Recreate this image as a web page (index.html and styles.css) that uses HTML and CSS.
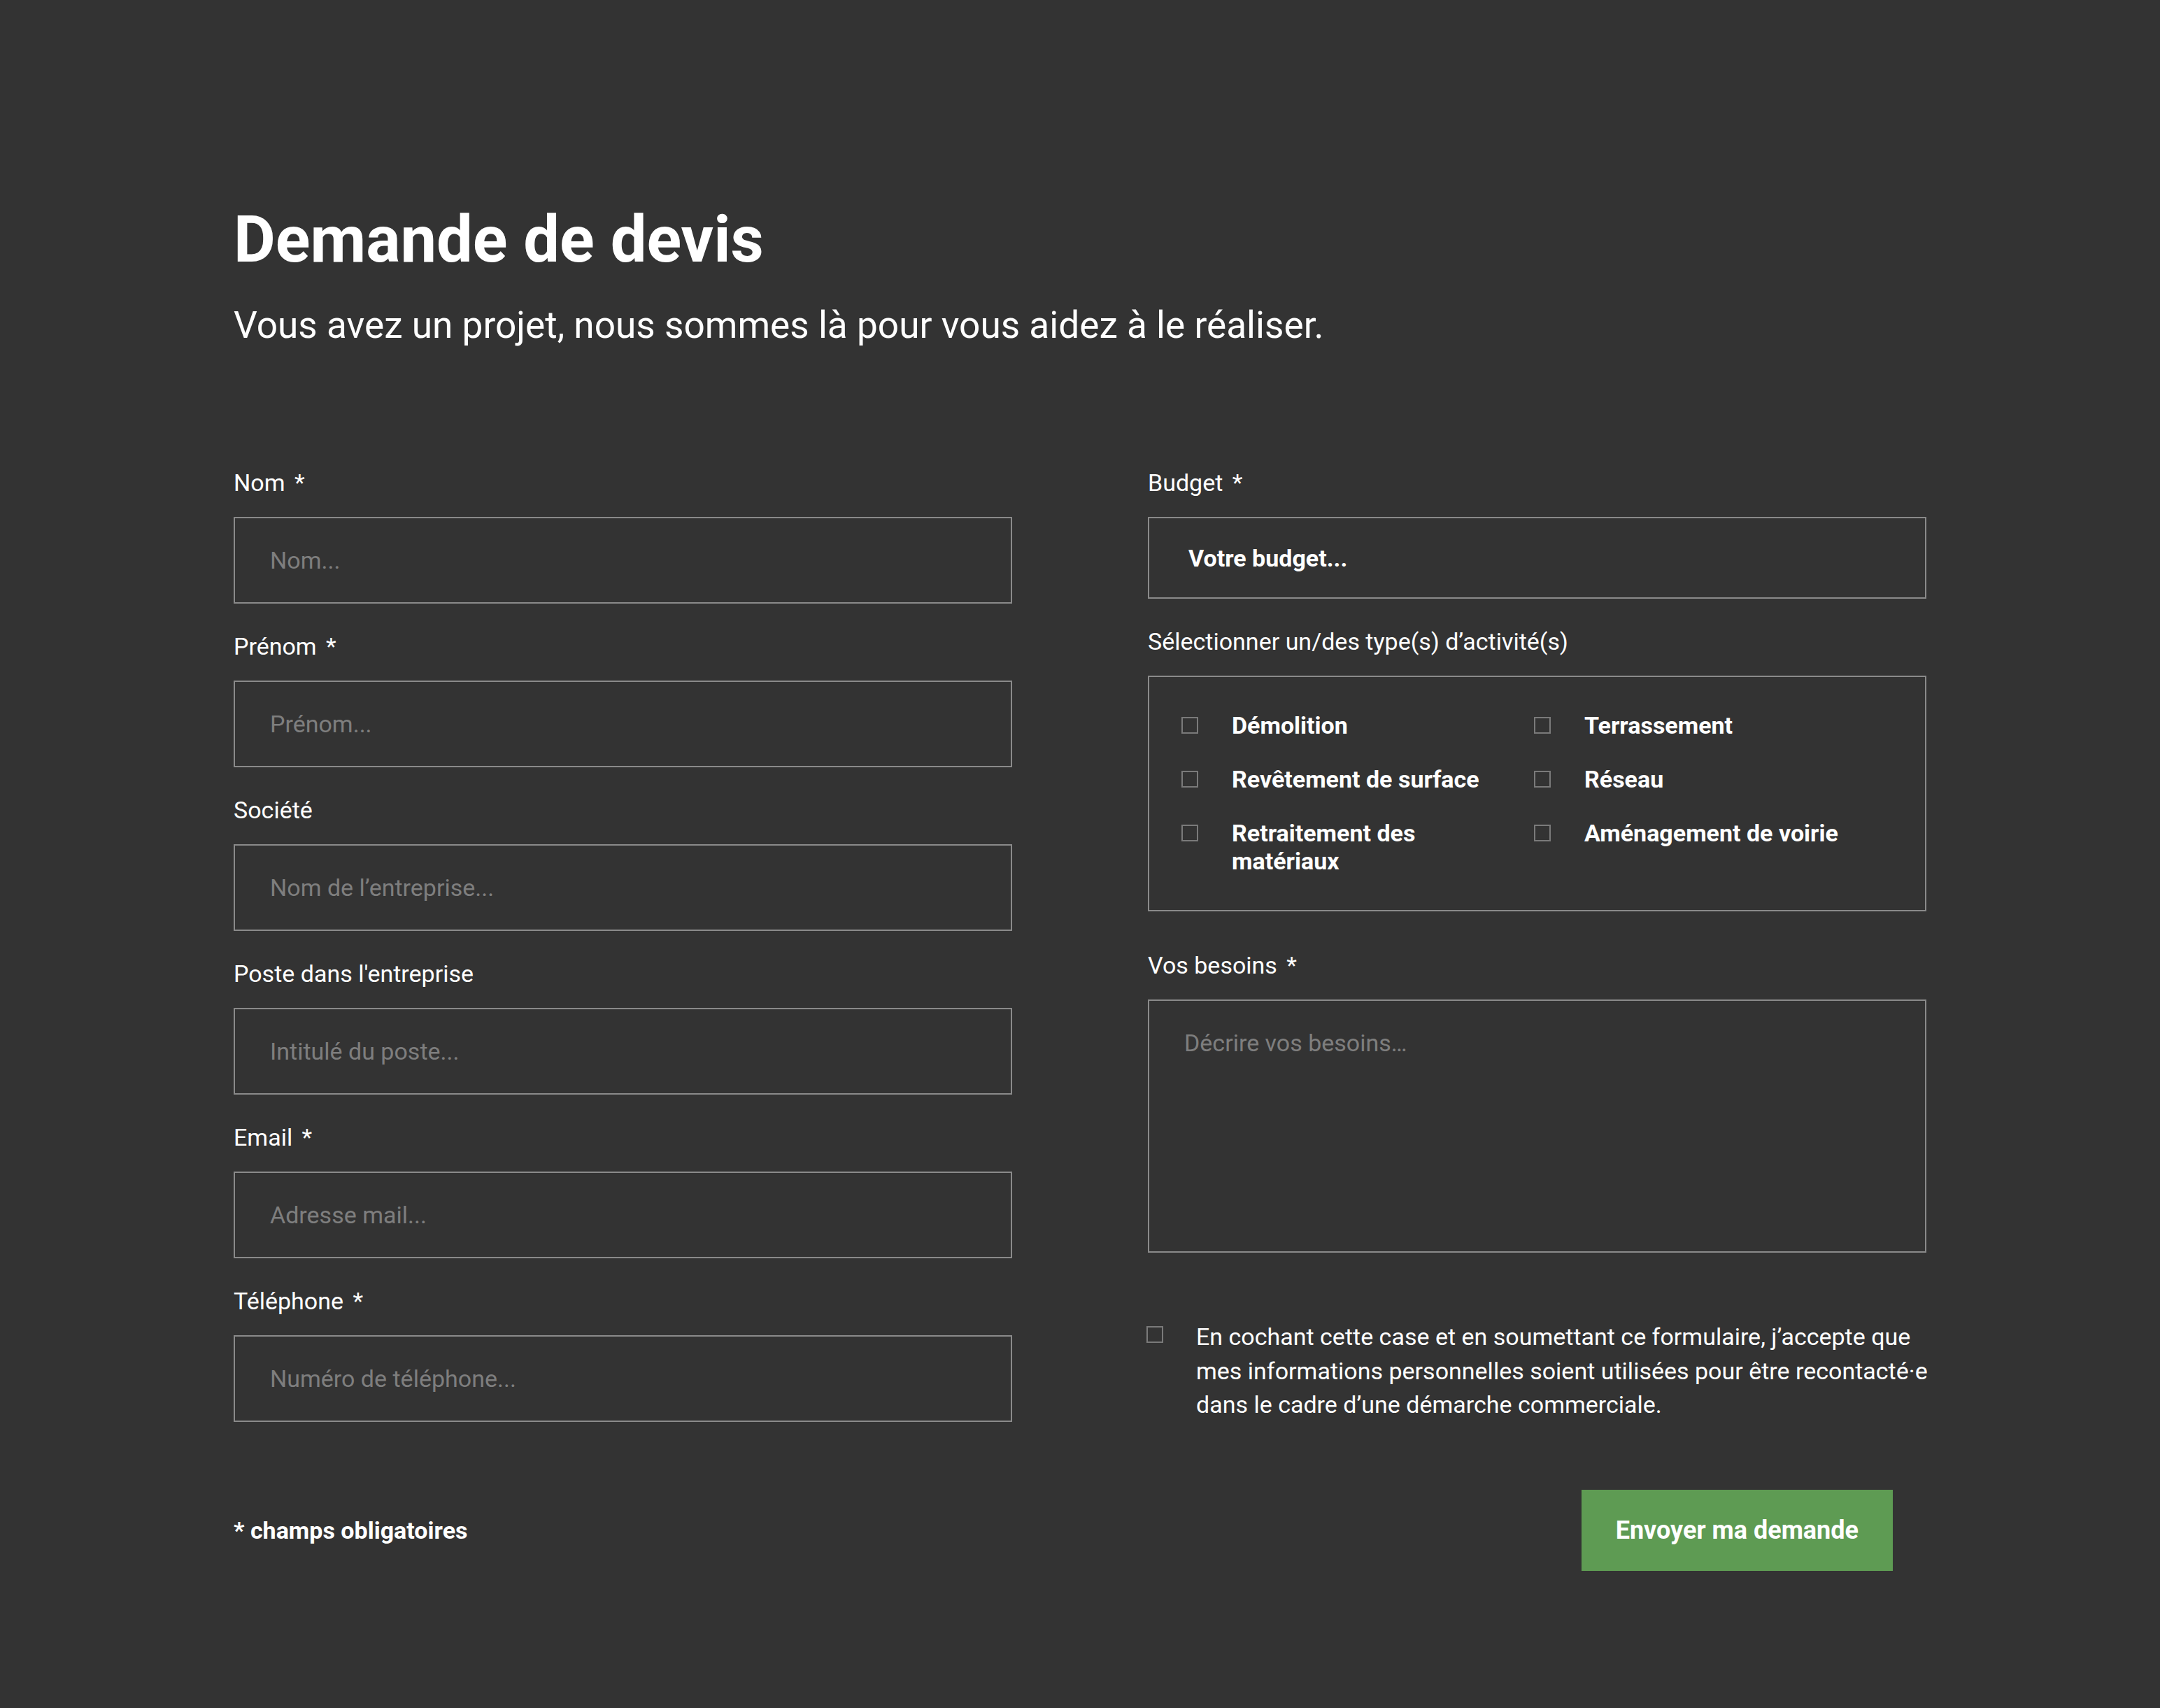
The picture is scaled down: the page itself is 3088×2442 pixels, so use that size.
FILE: index.html
```html
<!DOCTYPE html>
<html lang="fr">
<head>
<meta charset="utf-8">
<title>Demande de devis</title>
<link rel="stylesheet" href="styles.css">
</head>
<body>
<main class="page">
  <header class="intro">
    <h1 class="title">Demande de devis</h1>
    <p class="lead">Vous avez un projet, nous sommes là pour vous aidez à le réaliser.</p>
  </header>

  <form class="form">
    <div class="columns">
      <div class="col">
        <div class="field">
          <label class="label" for="nom">Nom <span class="req">*</span></label>
          <input class="input" id="nom" type="text" placeholder="Nom...">
        </div>
        <div class="field">
          <label class="label" for="prenom">Prénom <span class="req">*</span></label>
          <input class="input" id="prenom" type="text" placeholder="Prénom...">
        </div>
        <div class="field">
          <label class="label" for="societe">Société</label>
          <input class="input" id="societe" type="text" placeholder="Nom de l’entreprise...">
        </div>
        <div class="field">
          <label class="label" for="poste">Poste dans l'entreprise</label>
          <input class="input" id="poste" type="text" placeholder="Intitulé du poste...">
        </div>
        <div class="field">
          <label class="label" for="email">Email <span class="req">*</span></label>
          <input class="input" id="email" type="email" placeholder="Adresse mail...">
        </div>
        <div class="field">
          <label class="label" for="tel">Téléphone <span class="req">*</span></label>
          <input class="input" id="tel" type="tel" placeholder="Numéro de téléphone...">
        </div>
      </div>

      <div class="col">
        <div class="field">
          <label class="label" for="budget">Budget <span class="req">*</span></label>
          <select class="select" id="budget">
            <option>Votre budget...</option>
          </select>
        </div>
        <div class="field field-activities">
          <span class="label">Sélectionner un/des type(s) d’activité(s)</span>
          <fieldset class="activities">
            <div class="activity-grid">
              <label class="activity"><input class="check" type="checkbox"><span>Démolition</span></label>
              <label class="activity"><input class="check" type="checkbox"><span>Terrassement</span></label>
              <label class="activity"><input class="check" type="checkbox"><span>Revêtement de surface</span></label>
              <label class="activity"><input class="check" type="checkbox"><span>Réseau</span></label>
              <label class="activity"><input class="check" type="checkbox"><span>Retraitement des matériaux</span></label>
              <label class="activity"><input class="check" type="checkbox"><span>Aménagement de voirie</span></label>
            </div>
          </fieldset>
        </div>
        <div class="field field-needs">
          <label class="label" for="besoins">Vos besoins <span class="req">*</span></label>
          <textarea class="textarea" id="besoins" placeholder="Décrire vos besoins…"></textarea>
        </div>
        <label class="consent">
          <input class="check consent-check" type="checkbox">
          <span class="consent-text">En cochant cette case et en soumettant ce formulaire, j’accepte que mes informations personnelles soient utilisées pour être recontacté·e dans le cadre d’une démarche commerciale.</span>
        </label>
      </div>
    </div>

    <div class="actions">
      <p class="note">* champs obligatoires</p>
      <button class="submit" type="submit">Envoyer ma demande</button>
    </div>
  </form>
</main>
</body>
</html>
```

FILE: styles.css
```css
html, body {
  margin: 0;
  padding: 0;
  background: #333333;
}

body {
  font-family: Roboto, "Liberation Sans", Arial, sans-serif;
  color: #ffffff;
  min-height: 2442px;
}

.page {
  width: 2420px;
  margin: 0 auto;
  padding-top: 288px;
  padding-bottom: 196px;
}

.title {
  margin: 0;
  font-size: 92px;
  line-height: 110px;
  font-weight: 700;
}

.lead {
  margin: 36px 0 0;
  font-size: 53.2px;
  line-height: 62px;
  font-weight: 400;
}

.form {
  margin-top: 174px;
}

.columns {
  display: grid;
  grid-template-columns: 1fr 1fr;
  column-gap: 194px;
  align-items: start;
}

.col {
  display: flex;
  flex-direction: column;
}

.field {
  display: flex;
  flex-direction: column;
  margin-bottom: 41px;
}

.col > .field:last-child,
.field-needs {
  margin-bottom: 0;
}

.label {
  display: block;
  font-size: 34px;
  line-height: 40px;
  margin-bottom: 29px;
}

.req {
  margin-left: 5px;
}

.input,
.select,
.textarea {
  box-sizing: border-box;
  width: 100%;
  margin: 0;
  border: 2px solid #8a8a8a;
  border-radius: 0;
  background: transparent;
  color: #ffffff;
  font-family: Roboto, "Liberation Sans", Arial, sans-serif;
  font-size: 34px;
  outline: none;
}

.input {
  height: 124px;
  padding: 0 50px;
}

.input::placeholder,
.textarea::placeholder {
  color: #7e7e7e;
  opacity: 1;
}

.select {
  -webkit-appearance: none;
  appearance: none;
  height: 117px;
  padding: 0 56px;
  font-weight: 700;
}

.field-activities {
  margin-bottom: 57px;
}

.activities {
  margin: 0;
  border: 2px solid #8a8a8a;
  height: 337px;
  box-sizing: border-box;
  padding: 49px 46px 0;
  min-width: 0;
}

.activity-grid {
  display: grid;
  grid-template-columns: 468px 468px;
  column-gap: 36px;
  row-gap: 37px;
}

.activity {
  display: flex;
  align-items: flex-start;
  gap: 48px;
  font-size: 34px;
  line-height: 40px;
  font-weight: 700;
}

.check {
  -webkit-appearance: none;
  appearance: none;
  flex: none;
  box-sizing: border-box;
  width: 24px;
  height: 24px;
  margin: 8px 0 0;
  border: 2px solid #7a7a7a;
  border-radius: 0;
  background: transparent;
}

.textarea {
  height: 362px;
  padding: 40px 50px;
  line-height: 40px;
  resize: none;
  display: block;
}

.consent {
  display: flex;
  align-items: flex-start;
  gap: 47px;
  margin-top: 96px;
  margin-left: -2px;
  margin-right: -20px;
}

.consent-check {
  margin-top: 9px;
}

.consent-text {
  font-size: 34px;
  line-height: 48.5px;
}

.actions {
  display: flex;
  justify-content: space-between;
  align-items: center;
  margin-top: 97px;
}

.note {
  margin: 0;
  font-size: 34px;
  line-height: 40px;
  font-weight: 700;
}

.submit {
  height: 116px;
  margin-right: 48px;
  padding: 0 49px;
  border: 0;
  border-radius: 0;
  background: #5e9b53;
  color: #ffffff;
  font-family: Roboto, "Liberation Sans", Arial, sans-serif;
  font-size: 36px;
  font-weight: 700;
  cursor: pointer;
}
```
